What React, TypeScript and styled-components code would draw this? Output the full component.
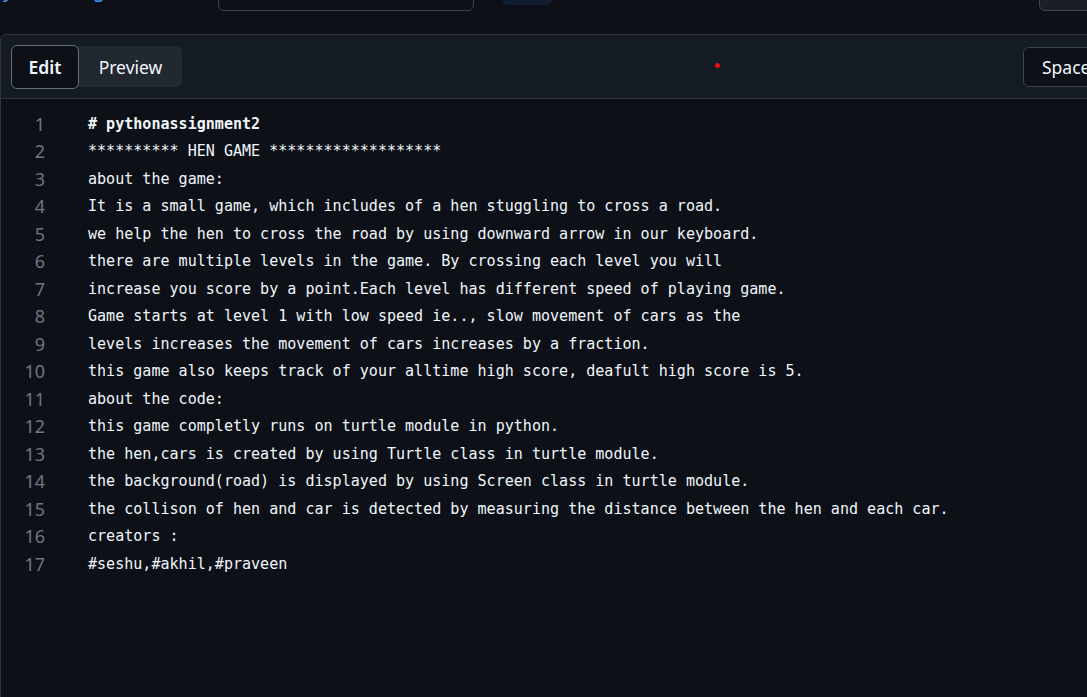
import React from "react";
import styled, { createGlobalStyle } from "styled-components";

const Global = createGlobalStyle`
  html, body { margin: 0; padding: 0; background: #0d1117; overflow: hidden; }
  body { width: 1087px; height: 697px; font-family: "Noto Sans", "Liberation Sans", sans-serif; color: #e6edf3; }
`;

const Page = styled.div`
  width: 1087px;
  height: 697px;
  overflow: hidden;
  background: #0d1117;
`;

const TopBar = styled.div`
  height: 34px;
  overflow: hidden;
`;

const TopRow = styled.div`
  display: flex;
  align-items: flex-start;
  margin-top: -22px;
  margin-left: -9px;
  width: 1300px;
`;

const Crumb = styled.span`
  font-size: 20px;
  line-height: 24px;
  color: #4493f8;
  white-space: nowrap;
`;

const FileInput = styled.div`
  box-sizing: border-box;
  width: 256px;
  height: 33px;
  border: 1px solid #3d444d;
  border-radius: 6px;
  background: #0d1117;
  margin-left: 27px;
`;

const BranchLabel = styled.div`
  width: 50px;
  height: 27px;
  border-radius: 6px;
  background: #121d2f;
  margin-left: 28px;
`;

const CancelButton = styled.div`
  box-sizing: border-box;
  width: 140px;
  height: 33px;
  border: 1px solid #3d444d;
  border-radius: 6px;
  background: #1a1f26;
  margin-left: 487px;
`;

const Panel = styled.div`
  box-sizing: border-box;
  width: 1200px;
  height: 700px;
  border: 1px solid #30363d;
  border-radius: 6px 6px 0 0;
  background: #0d1117;
`;

const Header = styled.div`
  position: relative;
  display: flex;
  align-items: center;
  height: 63px;
  padding: 0 10px;
  background: #151b23;
  border-bottom: 1px solid #30363d;
  border-radius: 6px 6px 0 0;
`;

const Tabs = styled.div`
  display: flex;
  align-items: center;
  height: 41px;
  width: 171px;
  background: #212830;
  border-radius: 6px;
`;

const Tab = styled.div<{ $active?: boolean }>`
  box-sizing: border-box;
  display: flex;
  align-items: center;
  justify-content: center;
  height: ${(p) => (p.$active ? "44px" : "41px")};
  width: ${(p) => (p.$active ? "68px" : "103px")};
  font-size: 17.5px;
  font-weight: ${(p) => (p.$active ? 600 : 400)};
  color: #f0f6fc;
  background: ${(p) => (p.$active ? "#0d1117" : "transparent")};
  border: ${(p) => (p.$active ? "1px solid #656c76" : "none")};
  border-radius: 6px;
`;

const RedDot = styled.span`
  position: absolute;
  left: 714px;
  top: 28px;
  width: 5px;
  height: 5px;
  border-radius: 50%;
  background: #e5100f;
`;

const SelectButton = styled.div`
  box-sizing: border-box;
  display: flex;
  align-items: center;
  height: 40px;
  padding: 0 18px;
  margin-left: 841px;
  border: 1px solid #3d444d;
  border-radius: 6px;
  background: #0d1117;
  font-size: 17.5px;
  color: #f0f6fc;
  white-space: nowrap;
`;

const Editor = styled.div`
  padding-top: 11px;
`;

const Line = styled.div`
  display: flex;
  height: 27.5px;
  align-items: center;
`;

const LineNo = styled.span`
  width: 44px;
  text-align: right;
  font-family: "Noto Sans", "Liberation Sans", sans-serif;
  font-size: 18px;
  color: #6e7681;
  flex: none;
`;

const Code = styled.span<{ $bold?: boolean }>`
  margin-left: 43px;
  font-family: "DejaVu Sans Mono", "Liberation Mono", monospace;
  font-size: 15.05px;
  font-weight: ${(p) => (p.$bold ? 700 : 400)};
  color: #f0f6fc;
  white-space: pre;
`;

const lines = [
  "# pythonassignment2",
  "********** HEN GAME *******************",
  "about the game:",
  "It is a small game, which includes of a hen stuggling to cross a road.",
  "we help the hen to cross the road by using downward arrow in our keyboard.",
  "there are multiple levels in the game. By crossing each level you will",
  "increase you score by a point.Each level has different speed of playing game.",
  "Game starts at level 1 with low speed ie.., slow movement of cars as the",
  "levels increases the movement of cars increases by a fraction.",
  "this game also keeps track of your alltime high score, deafult high score is 5.",
  "about the code:",
  "this game completly runs on turtle module in python.",
  "the hen,cars is created by using Turtle class in turtle module.",
  "the background(road) is displayed by using Screen class in turtle module.",
  "the collison of hen and car is detected by measuring the distance between the hen and each car.",
  "creators :",
  "#seshu,#akhil,#praveen",
];

export default function App() {
  return (
    <Page>
      <Global />
      <TopBar>
        <TopRow>
          <Crumb>pythonassignment2 /</Crumb>
          <FileInput />
          <BranchLabel />
          <CancelButton />
        </TopRow>
      </TopBar>
      <Panel>
        <Header>
          <Tabs>
            <Tab $active>Edit</Tab>
            <Tab>Preview</Tab>
          </Tabs>
          <RedDot />
          <SelectButton>Spaces</SelectButton>
        </Header>
        <Editor>
          {lines.map((l, i) => (
            <Line key={i}>
              <LineNo>{i + 1}</LineNo>
              <Code $bold={i === 0}>{l}</Code>
            </Line>
          ))}
        </Editor>
      </Panel>
    </Page>
  );
}
